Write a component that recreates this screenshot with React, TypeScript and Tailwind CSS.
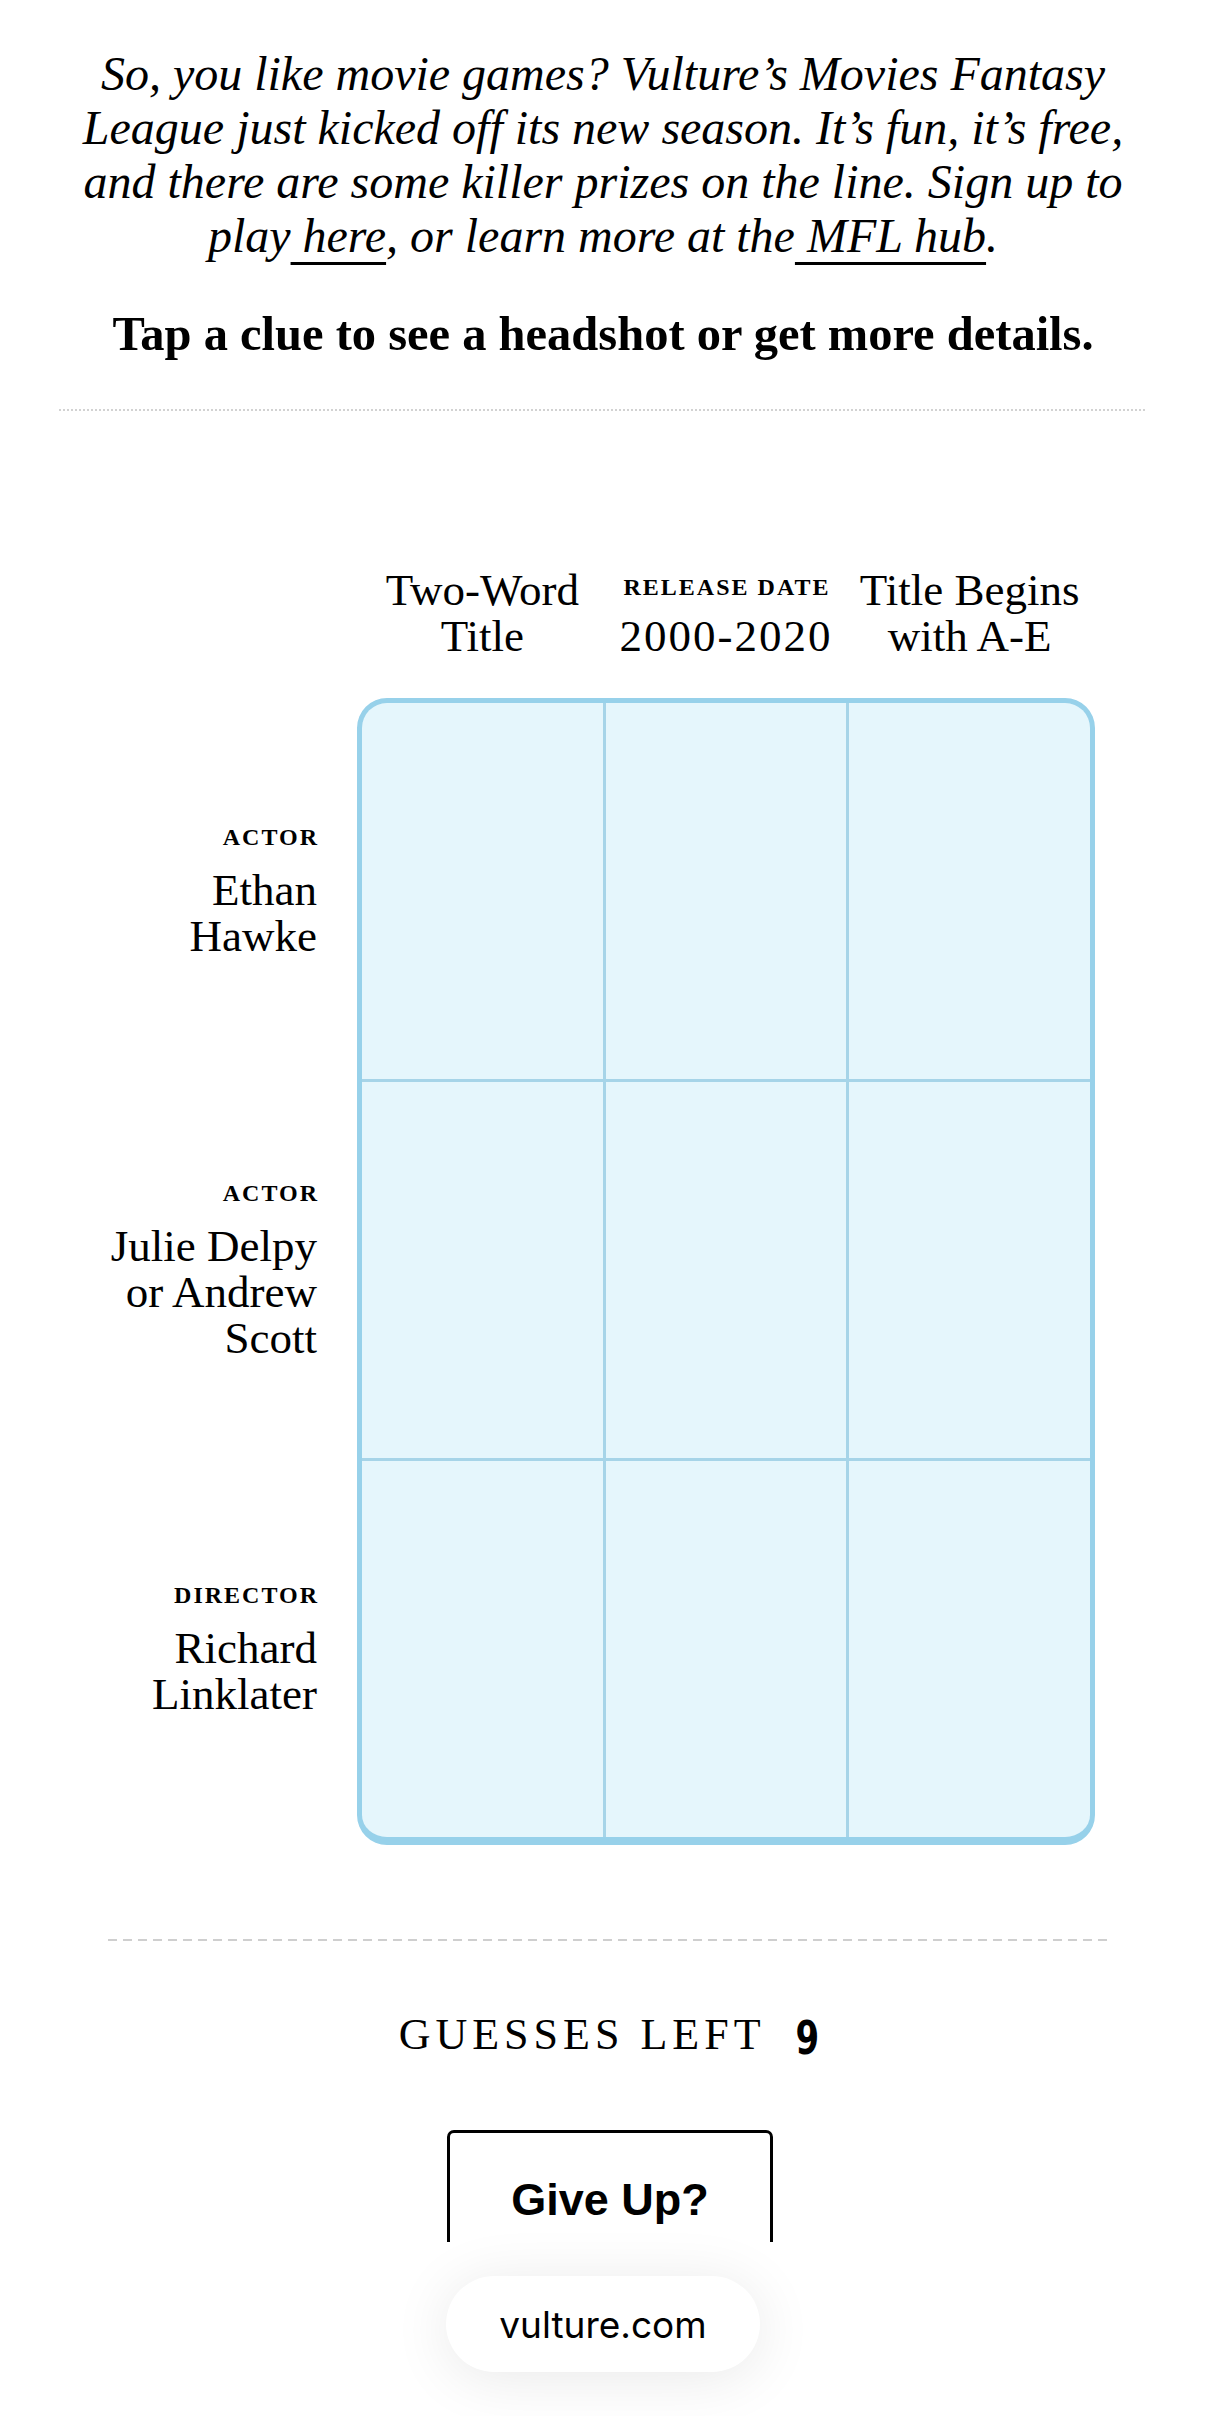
import React from "react";

const serif = "font-['Liberation_Serif','Times_New_Roman',serif]";

const columns: { kicker?: string; title: string }[] = [
  { title: "Two-Word Title" },
  { kicker: "Release Date", title: "2000-2020" },
  { title: "Title Begins with A-E" },
];

const rows: { kicker: string; name: string }[] = [
  { kicker: "Actor", name: "Ethan Hawke" },
  { kicker: "Actor", name: "Julie Delpy or Andrew Scott" },
  { kicker: "Director", name: "Richard Linklater" },
];

function Kicker({ children }: { children: React.ReactNode }) {
  return (
    <div className="text-[24px] font-bold uppercase leading-[26px] tracking-[2px]">{children}</div>
  );
}

export default function App() {
  return (
    <div className={`relative h-[2416px] w-full overflow-hidden bg-white text-black ${serif}`}>
      {/* Intro */}
      <div className="px-[59px] pt-[47px]">
        <p className="text-center text-[48px] italic leading-[54px]">
          <span className="block whitespace-nowrap">So, you like movie games? Vulture’s Movies Fantasy</span>
          <span className="block whitespace-nowrap">League just kicked off its new season. It’s fun, it’s free,</span>
          <span className="block whitespace-nowrap">and there are some killer prizes on the line. Sign up to</span>
          <span className="block whitespace-nowrap">
            play
            <a className="underline decoration-[3px] underline-offset-[10px]"> here</a>, or learn more at the
            <a className="underline decoration-[3px] underline-offset-[10px]"> MFL hub</a>.
          </span>
        </p>
        <p className="mt-[44px] text-center text-[48.5px] font-bold leading-[54px]">
          Tap a clue to see a headshot or get more details.
        </p>
        <div className="mt-[48px] h-[2px] bg-[repeating-linear-gradient(90deg,#d2d2d2_0_2px,transparent_2px_4px)]" />
      </div>

      {/* Column headers */}
      <div className="mt-[156px] grid grid-cols-[258px_738px] gap-x-[40px] pl-[59px]">
        <div />
        <div className="grid grid-cols-3 items-end gap-x-[3px] px-[5px] text-center">
          {columns.map((c) => (
            <div key={c.title} className="flex flex-col items-center justify-end">
              {c.kicker && (
                <div className="mb-[13px] pl-[2px]">
                  <Kicker>{c.kicker}</Kicker>
                </div>
              )}
              <div className={`text-[45px] leading-[46px] ${c.kicker ? "tracking-[2px]" : ""}`}>
                {c.title}
              </div>
            </div>
          ))}
        </div>
      </div>

      {/* Board with row labels */}
      <div className="mt-[39px] grid grid-cols-[258px_738px] gap-x-[40px] pl-[59px]">
        <div className="flex flex-col gap-[3px] pb-[8px] pt-[5px]">
          {rows.map((r) => (
            <div key={r.name} className="flex h-[376px] items-center justify-end">
              <div className="w-[225px] text-right">
                <div className="mb-[17px] mr-[-2px]">
                  <Kicker>{r.kicker}</Kicker>
                </div>
                <div className="text-[45px] leading-[46px]">{r.name}</div>
              </div>
            </div>
          ))}
        </div>
        <div className="overflow-hidden rounded-[30px] border-[5px] border-b-[8px] border-[#97d1ea] bg-[#a6d4e8]">
          <div className="grid grid-cols-3 gap-[3px]">
            {Array.from({ length: 9 }).map((_, i) => (
              <div key={i} className="h-[376px] bg-[#e5f6fc]" />
            ))}
          </div>
        </div>
      </div>

      {/* Footer area */}
      <div className="ml-[108px] mr-[94px]">
        <div className="mt-[94px] h-[2px] bg-[repeating-linear-gradient(90deg,#cfcfcf_0_9px,transparent_9px_15px)]" />
        <div className="mt-[74px] flex h-[40px] items-center justify-center">
          <span className="text-[44px] uppercase leading-[40px] tracking-[5px]">Guesses Left</span>
          <span className="ml-[27px] mt-[6px] inline-block scale-x-[0.82] font-['DejaVu_Sans_Condensed','Liberation_Sans',sans-serif] text-[46px] font-bold leading-[40px]">
            9
          </span>
        </div>
        <div className="mt-[75px] flex justify-center">
          <button className="flex h-[140px] w-[326px] items-center justify-center rounded-[7px] border-[3px] border-black bg-white font-['Liberation_Sans',Arial,sans-serif] text-[45px] font-bold leading-[50px] text-black">
            Give Up?
          </button>
        </div>
      </div>

      {/* Browser bottom bar */}
      <div className="absolute bottom-0 left-0 right-0 flex h-[174px] justify-center bg-white pt-[34px]">
        <div className="flex h-[96px] w-[314px] items-center justify-center rounded-full bg-white font-['Inter','Liberation_Sans',sans-serif] text-[37px] leading-none text-black shadow-[0_6px_60px_rgba(0,0,0,0.09)]">
          vulture.com
        </div>
      </div>
    </div>
  );
}
